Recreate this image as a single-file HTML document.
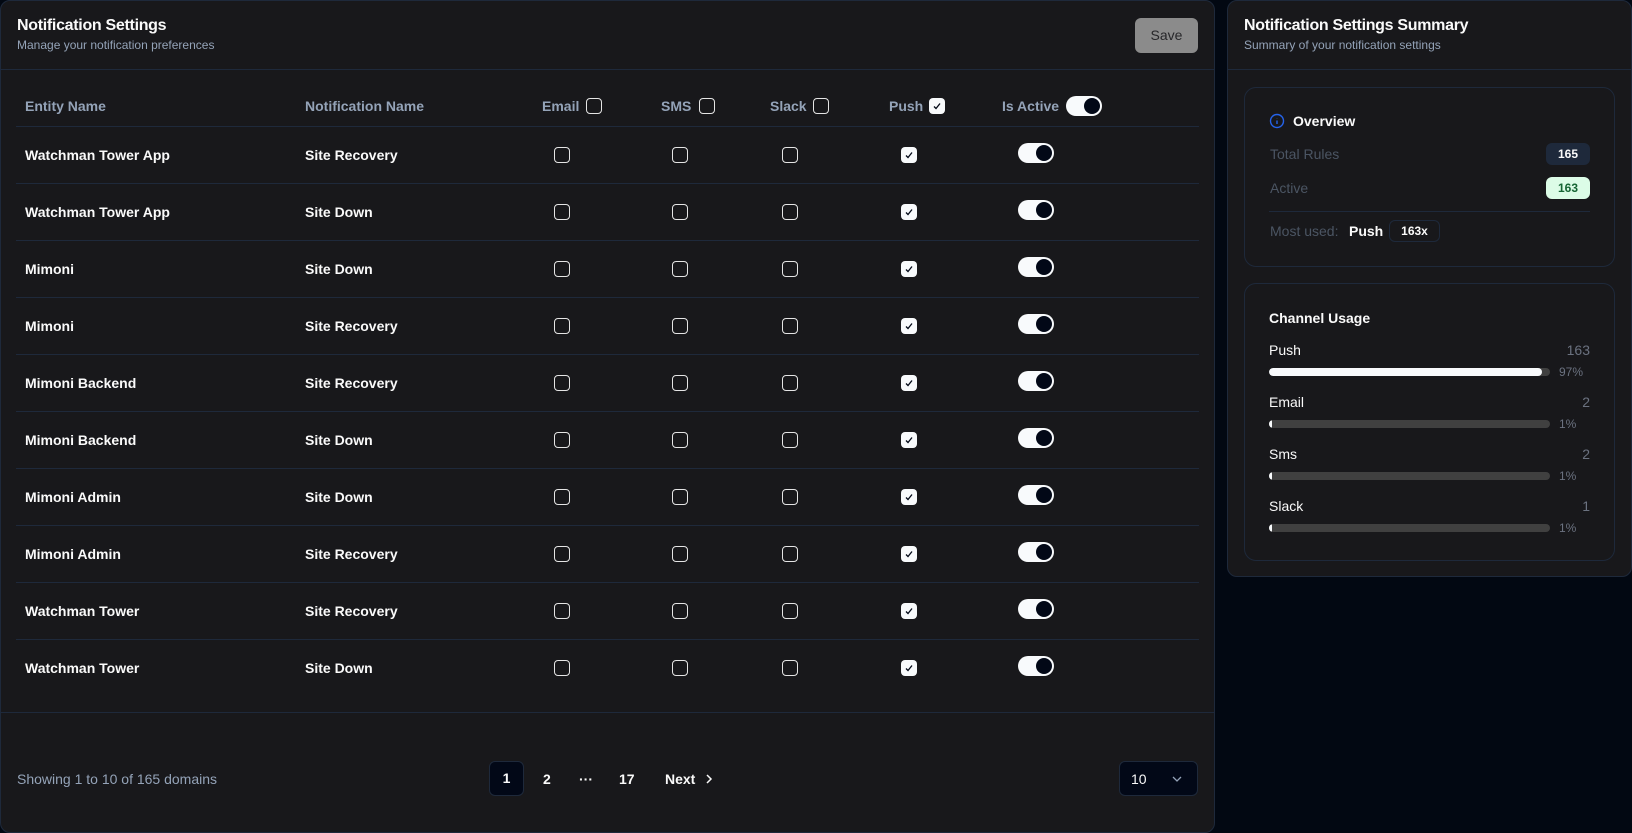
<!DOCTYPE html>
<html><head><meta charset="utf-8"><style>
*{box-sizing:border-box;margin:0;padding:0}
body{width:1632px;height:833px;background:#020812;font-family:"Liberation Sans",sans-serif;position:relative;overflow:hidden;color:#fafafa}
.a{position:absolute}
.panel{background:#18181b;border:1px solid #1e293b;border-radius:10px}
.t{font-size:16px;font-weight:700;letter-spacing:-0.3px}
.s{font-size:12px;color:#94a3b8}
.hd{font-size:14px;color:#94a3b8;font-weight:600}
.cell{font-size:14px;font-weight:600;color:#fafafa}
.cb{width:16px;height:16px;border:1.3px solid #e5e5e5;border-radius:4px}
.cbc{width:16px;height:16px;background:#f8fafc;border-radius:4px}
.cbc svg{display:block}
.tg{width:36px;height:20px;background:#f8fafc;border-radius:10px}
.tg:after{content:"";position:absolute;right:2px;top:2px;width:16px;height:16px;border-radius:50%;background:#020817}
.hr{height:1px;background:#1e293b}
.badge{font-size:12px;font-weight:700;border-radius:6px;text-align:center;line-height:22px}
.lab{font-size:14px;color:#4b5563}
.ch{font-size:14px;color:#fafafa}
.num{font-size:14px;color:#6b7280;text-align:right}
.bar{height:8px;background:#404040;border-radius:4px;overflow:hidden}
.bar i{display:block;height:8px;background:#f8fafc;border-radius:4px}
.pc{font-size:12px;color:#6b7280}
</style></head><body>
<div class="a panel" style="left:0;top:0;width:1215px;height:833px;border-top-left-radius:10px"></div>
<div class="a t" style="left:17px;top:17px">Notification Settings</div>
<div class="a s" style="left:17px;top:38px">Manage your notification preferences</div>
<div class="a" style="left:1135px;top:18px;width:63px;height:35px;background:#8b8b8b;border-radius:6px;color:#27272a;font-size:14px;text-align:center;line-height:35px">Save</div>
<div class="a hr" style="left:1px;top:69px;width:1213px"></div>

<div class="a hd" style="left:25px;top:98px">Entity Name</div>
<div class="a hd" style="left:305px;top:98px">Notification Name</div>
<div class="a hd" style="left:542px;top:98px">Email</div><div class="a cb" style="left:586px;top:98px"></div>
<div class="a hd" style="left:661px;top:98px">SMS</div><div class="a cb" style="left:699px;top:98px"></div>
<div class="a hd" style="left:770px;top:98px">Slack</div><div class="a cb" style="left:813px;top:98px"></div>
<div class="a hd" style="left:889px;top:98px">Push</div><div class="a cbc" style="left:929px;top:98px"><svg width="16" height="16"><path d="M5 8.5l2 2 4-5" stroke="#020817" stroke-width="1.3" fill="none"/></svg></div>
<div class="a hd" style="left:1002px;top:98px">Is Active</div><div class="a tg" style="left:1066px;top:96px"></div>

<div id="rows"></div>
<script>
var d=[["Watchman Tower App","Site Recovery"],["Watchman Tower App","Site Down"],["Mimoni","Site Down"],["Mimoni","Site Recovery"],["Mimoni Backend","Site Recovery"],["Mimoni Backend","Site Down"],["Mimoni Admin","Site Down"],["Mimoni Admin","Site Recovery"],["Watchman Tower","Site Recovery"],["Watchman Tower","Site Down"]];
var h="";
for(var i=0;i<10;i++){var c=154+i*57;
h+='<div class="a hr" style="left:16px;top:'+(c-28)+'px;width:1183px"></div>';
h+='<div class="a cell" style="left:25px;top:'+(c-7)+'px">'+d[i][0]+'</div>';
h+='<div class="a cell" style="left:305px;top:'+(c-7)+'px">'+d[i][1]+'</div>';
[562,680,790].forEach(function(x){h+='<div class="a cb" style="left:'+(x-8)+'px;top:'+(c-7)+'px"></div>'});
h+='<div class="a cbc" style="left:901px;top:'+(c-7)+'px"><svg width="16" height="16"><path d="M5 8.5l2 2 4-5" stroke="#020817" stroke-width="1.3" fill="none"/></svg></div>';
h+='<div class="a tg" style="left:1018px;top:'+(c-11)+'px"></div>';}
document.getElementById("rows").innerHTML=h;
</script>
<div class="a hr" style="left:1px;top:712px;width:1213px"></div>
<div class="a" style="left:17px;top:771px;font-size:14px;color:#94a3b8">Showing 1 to 10 of 165 domains</div>
<div class="a" style="left:489px;top:761px;width:35px;height:35px;background:#020817;border:1px solid #1e293b;border-radius:6px;font-size:14px;font-weight:600;text-align:center;line-height:33px">1</div>
<div class="a" style="left:543px;top:771px;font-size:14px;font-weight:600">2</div>
<div class="a" style="left:579px;top:771px;font-size:14px;font-weight:700">···</div>
<div class="a" style="left:619px;top:771px;font-size:14px;font-weight:600">17</div>
<div class="a" style="left:665px;top:771px;font-size:14px;font-weight:600">Next</div>
<svg class="a" style="left:703px;top:772px" width="12" height="14"><path d="M4 3l4 4-4 4" stroke="#fafafa" stroke-width="1.5" fill="none"/></svg>
<div class="a" style="left:1119px;top:761px;width:79px;height:35px;background:#020817;border:1px solid #1e293b;border-radius:6px"></div>
<div class="a" style="left:1131px;top:771px;font-size:14px">10</div>
<svg class="a" style="left:1171px;top:773px" width="12" height="12"><path d="M2 4l4 4 4-4" stroke="#94a3b8" stroke-width="1.3" fill="none"/></svg>

<div class="a panel" style="left:1227px;top:0;width:405px;height:577px"></div>
<div class="a t" style="left:1244px;top:17px">Notification Settings Summary</div>
<div class="a s" style="left:1244px;top:38px">Summary of your notification settings</div>
<div class="a hr" style="left:1228px;top:69px;width:403px"></div>

<div class="a" style="left:1244px;top:87px;width:371px;height:180px;border:1px solid #1e293b;border-radius:12px"></div>
<svg class="a" style="left:1269px;top:113px" width="16" height="16"><circle cx="8" cy="8" r="6.5" stroke="#2563eb" stroke-width="1.4" fill="none"/><path d="M8 7.5v3.5M8 5v.3" stroke="#2563eb" stroke-width="1.4"/></svg>
<div class="a" style="left:1293px;top:113px;font-size:14px;font-weight:600">Overview</div>
<div class="a lab" style="left:1270px;top:146px">Total Rules</div>
<div class="a badge" style="left:1546px;top:143px;width:44px;background:#1e293b;color:#fafafa">165</div>
<div class="a lab" style="left:1270px;top:180px">Active</div>
<div class="a badge" style="left:1546px;top:177px;width:44px;background:#dcfce7;color:#166534">163</div>
<div class="a hr" style="left:1269px;top:211px;width:321px"></div>
<div class="a lab" style="left:1270px;top:223px">Most used:</div>
<div class="a" style="left:1349px;top:223px;font-size:14px;font-weight:600">Push</div>
<div class="a badge" style="left:1389px;top:220px;width:51px;border:1px solid #1e293b;line-height:20px">163x</div>

<div class="a" style="left:1244px;top:283px;width:371px;height:278px;border:1px solid #1e293b;border-radius:12px"></div>
<div class="a" style="left:1269px;top:310px;font-size:14px;font-weight:600">Channel Usage</div>
<div class="a ch" style="left:1269px;top:342px">Push</div><div class="a num" style="left:1540px;top:342px;width:50px">163</div>
<div class="a bar" style="left:1269px;top:368px;width:281px"><i style="width:97%"></i></div><div class="a pc" style="left:1559px;top:365px">97%</div>
<div class="a ch" style="left:1269px;top:394px">Email</div><div class="a num" style="left:1540px;top:394px;width:50px">2</div>
<div class="a bar" style="left:1269px;top:420px;width:281px"><i style="width:1%"></i></div><div class="a pc" style="left:1559px;top:417px">1%</div>
<div class="a ch" style="left:1269px;top:446px">Sms</div><div class="a num" style="left:1540px;top:446px;width:50px">2</div>
<div class="a bar" style="left:1269px;top:472px;width:281px"><i style="width:1%"></i></div><div class="a pc" style="left:1559px;top:469px">1%</div>
<div class="a ch" style="left:1269px;top:498px">Slack</div><div class="a num" style="left:1540px;top:498px;width:50px">1</div>
<div class="a bar" style="left:1269px;top:524px;width:281px"><i style="width:1%"></i></div><div class="a pc" style="left:1559px;top:521px">1%</div>
</body></html>
